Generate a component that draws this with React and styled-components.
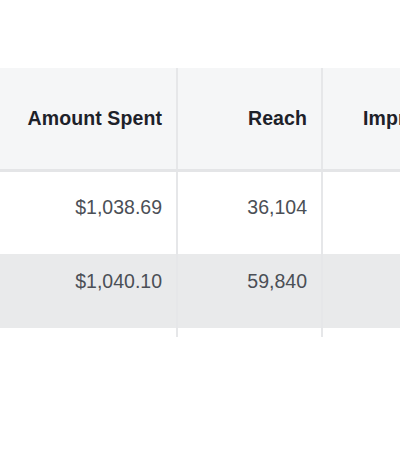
import React from 'react';
import styled, { createGlobalStyle } from 'styled-components';

const GlobalStyle = createGlobalStyle`
  html, body {
    margin: 0;
    padding: 0;
    background: #ffffff;
  }
  body {
    font-family: 'Liberation Sans', Arial, sans-serif;
    width: 400px;
    height: 470px;
    overflow: hidden;
  }
`;

const COLUMNS = [
  { key: 'spent', label: 'Amount Spent', width: 178 },
  { key: 'reach', label: 'Reach', width: 145 },
  { key: 'impressions', label: 'Impressions', width: 172 }
];

const ROWS = [
  { id: 1, spent: '$1,038.69', reach: '36,104', impressions: '', height: 82, top: 24 },
  { id: 2, spent: '$1,040.10', reach: '59,840', impressions: '', height: 74, top: 16, shaded: true }
];

const Page = styled.div`
  padding-top: 68px;
  width: 400px;
  overflow: hidden;
`;

const Table = styled.div`
  display: flex;
  flex-direction: column;
  width: max-content;
`;

const HeaderRow = styled.div`
  display: flex;
  height: 101px;
  background: #f5f6f7;
  border-bottom: 3px solid #e4e5e7;
  box-shadow: 0 2px 0 #f3f4f5;
`;

const Row = styled.div`
  display: flex;
  height: ${p => p.$height}px;
  background: ${p => (p.$shaded ? '#e9eaeb' : '#ffffff')};
`;

const Spacer = styled.div`
  display: flex;
  height: 9px;
`;

const Cell = styled.div`
  box-sizing: border-box;
  width: ${p => p.$width}px;
  flex: none;
  display: flex;
  justify-content: flex-end;
  padding: 0 14px;
  border-right: 2px solid #e6e7e9;
`;

const HeadCell = styled(Cell)`
  align-items: center;
  font-size: 19.5px;
  font-weight: 700;
  color: #1d2129;
  letter-spacing: 0.1px;
`;

const BodyCell = styled(Cell)`
  align-items: flex-start;
  padding-top: ${p => p.$top}px;
  font-size: 19.5px;
  color: #4b4f56;
`;

const App = () => {
  return (
    <Page>
      <GlobalStyle />
      <Table>
        <HeaderRow>
          {COLUMNS.map(col => (
            <HeadCell key={col.key} $width={col.width}>
              {col.label}
            </HeadCell>
          ))}
        </HeaderRow>
        {ROWS.map(row => (
          <Row key={row.id} $height={row.height} $shaded={row.shaded}>
            {COLUMNS.map(col => (
              <BodyCell key={col.key} $width={col.width} $top={row.top}>
                {row[col.key]}
              </BodyCell>
            ))}
          </Row>
        ))}
        <Spacer>
          {COLUMNS.map(col => (
            <Cell key={col.key} $width={col.width} />
          ))}
        </Spacer>
      </Table>
    </Page>
  );
};

export default App;
